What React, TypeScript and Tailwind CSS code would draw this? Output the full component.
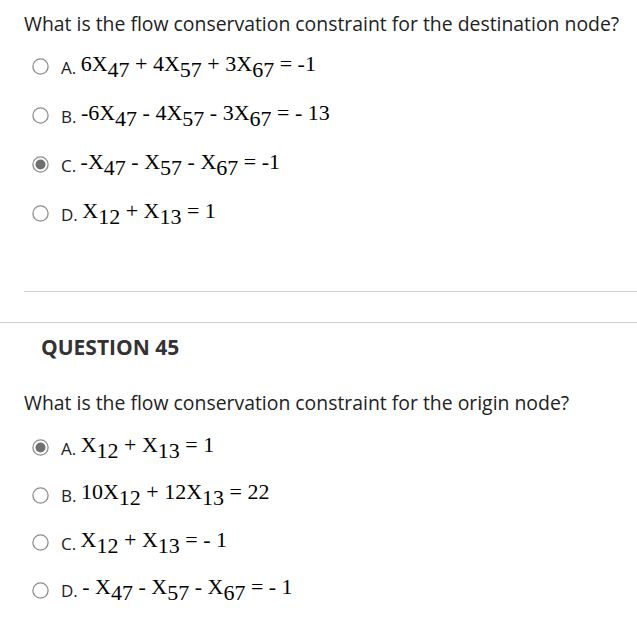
import React from "react";

type Part = { t: string; sub?: boolean };

function parse(s: string): Part[] {
  const parts: Part[] = [];
  const re = /X(\d\d)/g;
  let last = 0;
  let m: RegExpExecArray | null;
  while ((m = re.exec(s))) {
    if (m.index > last) parts.push({ t: s.slice(last, m.index) });
    parts.push({ t: "X" });
    parts.push({ t: m[1], sub: true });
    last = m.index + m[0].length;
  }
  if (last < s.length) parts.push({ t: s.slice(last) });
  return parts;
}

function Radio({ checked }: { checked: boolean }) {
  return (
    <svg width="17" height="17" viewBox="0 0 17 17" className="shrink-0">
      <circle cx="8.5" cy="8.5" r="7.6" fill="#fff" stroke="#8e8e8e" strokeWidth="1.3" />
      {checked && <circle cx="8.5" cy="8.5" r="5" fill="#707070" />}
    </svg>
  );
}

function Option({ label, expr, checked, h }: { label: string; expr: string; checked?: boolean; h: string }) {
  return (
    <div className={`flex items-center pl-[8px] ${h}`}>
      <Radio checked={!!checked} />
      <span className="ml-[12px] text-[17px] leading-[22px] text-[#222] font-['Open_Sans',sans-serif] whitespace-pre">
        {label}{" "}
        <span className="align-[3px] text-[22px] text-black font-['Liberation_Serif',serif] whitespace-pre">
          {parse(expr).map((p, i) =>
            p.sub ? (
              <span key={i} className="align-[-6px]">
                {p.t}
              </span>
            ) : (
              <span key={i}>{p.t}</span>
            )
          )}
        </span>
      </span>
    </div>
  );
}

export default function App() {
  return (
    <div className="w-[637px] h-[633px] bg-white overflow-hidden font-['Open_Sans',sans-serif] text-[#222]">
      <div className="pl-6 pt-[10px]">
        <p className="text-[19.4px] leading-[28px] whitespace-nowrap">
          What is the flow conservation constraint for the destination node?
        </p>
        <div className="mt-[4px]">
          <Option h="h-[49px]" label="A." expr="6X47 + 4X57 + 3X67 = -1" />
          <Option h="h-[49px]" label="B." expr="-6X47 - 4X57 - 3X67 = - 13" />
          <Option h="h-[49px]" label="C." expr="-X47 - X57 - X67 = -1" checked />
          <Option h="h-[49px]" label="D." expr="X12 + X13 = 1" />
        </div>
        <div className="mt-[53px] border-t border-[#d0d0d0]" />
      </div>
      <div className="mt-[30px] border-t border-[#d0d0d0]" />
      <div className="pl-[41px] pt-[9px]">
        <h2 className="text-[21px] leading-[30px] font-bold text-[#333]">QUESTION 45</h2>
      </div>
      <div className="pl-6 pt-[27px]">
        <p className="text-[19.4px] leading-[28px] whitespace-nowrap">
          What is the flow conservation constraint for the origin node?
        </p>
        <div className="mt-[7px]">
          <Option h="h-[47.5px]" label="A." expr="X12 + X13 = 1" checked />
          <Option h="h-[47.5px]" label="B." expr="10X12 + 12X13 = 22" />
          <Option h="h-[47.5px]" label="C." expr="X12 + X13 = - 1" />
          <Option h="h-[47.5px]" label="D." expr="- X47 - X57 - X67 = - 1" />
        </div>
      </div>
    </div>
  );
}
